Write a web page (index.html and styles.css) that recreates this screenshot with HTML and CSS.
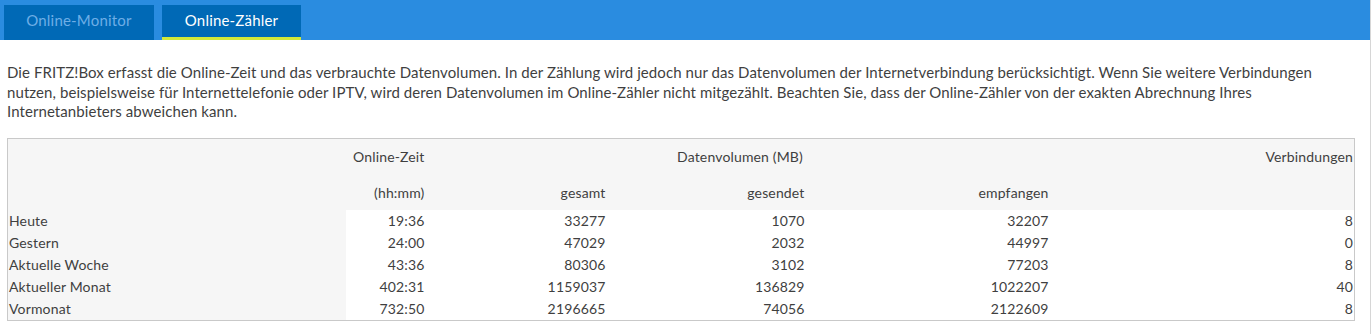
FILE: index.html
```html
<!DOCTYPE html>
<html lang="de">

<head>
    <meta charset="UTF-8">
    <meta name="viewport" content="width=device-width, initial-scale=1.0">
    <title>Online-Zähler</title>
    <link rel="stylesheet" href="styles.css">
</head>

<body>

    <div class="page">
        <div class="top-bar">
            <div class="tab">Online-Monitor</div>
            <div class="tab tab-active">Online-Zähler</div>
        </div>

        <div class="content">
            <p class="intro">Die FRITZ!Box erfasst die Online-Zeit und das verbrauchte Datenvolumen. In der Zählung wird jedoch nur das Datenvolumen der Internetverbindung berücksichtigt. Wenn Sie weitere Verbindungen nutzen, beispielsweise für Internettelefonie oder IPTV, wird deren Datenvolumen im Online-Zähler nicht mitgezählt. Beachten Sie, dass der Online-Zähler von der exakten Abrechnung Ihres Internetanbieters abweichen kann.</p>

            <table class="counter">
                <colgroup>
                    <col class="col-label">
                    <col class="col-time">
                    <col class="col-total">
                    <col class="col-sent">
                    <col class="col-recv">
                    <col>
                </colgroup>
                <thead>
                    <tr class="head-top">
                        <th></th>
                        <th class="num">Online-Zeit</th>
                        <th colspan="3" class="center">Datenvolumen (MB)</th>
                        <th class="num last">Verbindungen</th>
                    </tr>
                    <tr class="head-sub">
                        <th></th>
                        <th class="num">(hh:mm)</th>
                        <th class="num">gesamt</th>
                        <th class="num">gesendet</th>
                        <th class="num">empfangen</th>
                        <th></th>
                    </tr>
                </thead>
                <tbody>
                    <tr>
                        <th class="label">Heute</th>
                        <td class="num">19:36</td>
                        <td class="num">33277</td>
                        <td class="num">1070</td>
                        <td class="num">32207</td>
                        <td class="num last">8</td>
                    </tr>
                    <tr>
                        <th class="label">Gestern</th>
                        <td class="num">24:00</td>
                        <td class="num">47029</td>
                        <td class="num">2032</td>
                        <td class="num">44997</td>
                        <td class="num last">0</td>
                    </tr>
                    <tr>
                        <th class="label">Aktuelle Woche</th>
                        <td class="num">43:36</td>
                        <td class="num">80306</td>
                        <td class="num">3102</td>
                        <td class="num">77203</td>
                        <td class="num last">8</td>
                    </tr>
                    <tr>
                        <th class="label">Aktueller Monat</th>
                        <td class="num">402:31</td>
                        <td class="num">1159037</td>
                        <td class="num">136829</td>
                        <td class="num">1022207</td>
                        <td class="num last">40</td>
                    </tr>
                    <tr>
                        <th class="label">Vormonat</th>
                        <td class="num">732:50</td>
                        <td class="num">2196665</td>
                        <td class="num">74056</td>
                        <td class="num">2122609</td>
                        <td class="num last">8</td>
                    </tr>
                </tbody>
            </table>
        </div>
    </div>

</body>

</html>
```

FILE: styles.css
```css
body {
    font-family: Lato, "Open Sans", sans-serif;
    font-size: 15px;
    letter-spacing: 0.08px;
    color: #3f3f3f;
    margin: 0;
    background-color: #ffffff;
}

.page {
    width: 1370px;
    height: 100vh;
    border-right: 1px solid #d6d6d6;
}

.top-bar {
    background-color: #2a8ce0;
    height: 40px;
    display: flex;
    align-items: flex-start;
    gap: 8px;
    padding: 5px 0 0 4px;
    box-sizing: border-box;
}

.tab {
    background-color: #0069b6;
    color: #6eaee6;
    width: 150px;
    height: 35px;
    line-height: 31px;
    text-align: center;
    font-size: 15px;
    letter-spacing: 0.2px;
}

.tab-active {
    color: #ffffff;
    width: 139px;
    height: 32px;
    border-bottom: 3px solid #d2e83a;
}

.content {
    padding: 0 16px 0 7px;
}

.intro {
    margin: 23px 0 16px 0;
    line-height: 19.5px;
    width: 1340px;
}

.counter {
    width: 1348px;
    border-collapse: collapse;
    border: 1px solid #c9c9c9;
    table-layout: fixed;
    font-size: 14px;
    letter-spacing: 0.15px;
}

.col-label {
    width: 338px;
}

.col-time {
    width: 85px;
}

.col-total {
    width: 181px;
}

.col-sent {
    width: 199px;
}

.col-recv {
    width: 244px;
}

.counter th,
.counter td {
    font-weight: normal;
    padding: 0 6px 0 1px;
    white-space: nowrap;
}

.counter thead th {
    background-color: #f6f6f6;
}

.head-top th {
    height: 36px;
}

.head-sub th {
    height: 35px;
}

.counter tbody th,
.counter tbody td {
    height: 22px;
}

.counter .label {
    background-color: #f6f6f6;
    text-align: left;
}

.num {
    text-align: right;
}

.center {
    text-align: center;
}

.counter .last {
    padding-right: 1px;
}
```
